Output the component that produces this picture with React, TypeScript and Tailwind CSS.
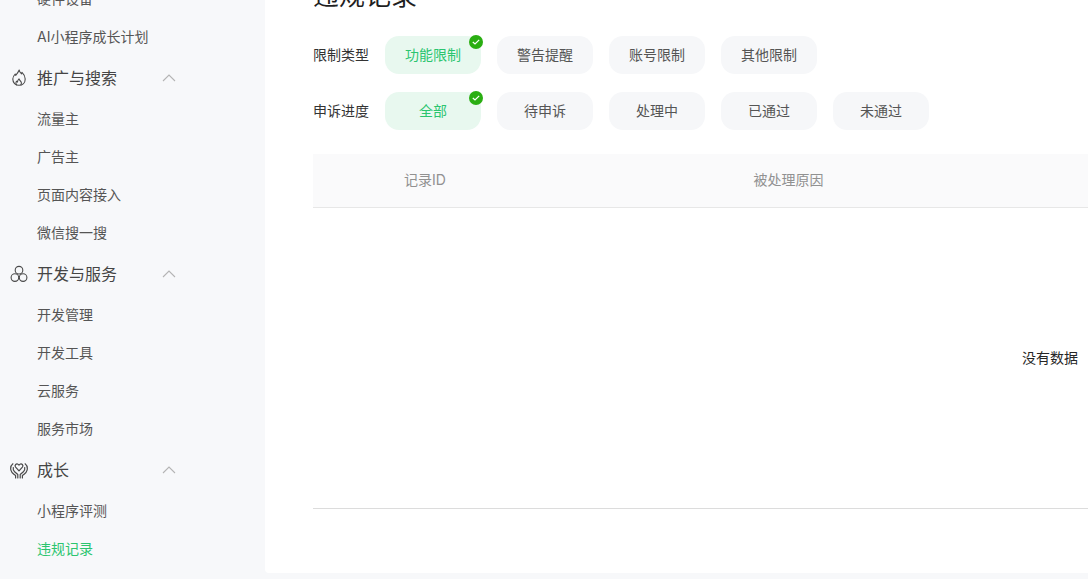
const FONT = 'font-["Inter","Noto_Sans_CJK_SC",sans-serif]';

const FlameIcon = () => (
  <svg width="14" height="18" viewBox="0 0 14 18" fill="none" stroke="#4a4a4a" strokeWidth="1.1" strokeLinejoin="round">
    <path d="M7.200 1c.2 2 1.300 3 2.300 3.800.3-.5.500-1 .5-1.500 1.800 1.700 3.200 3.800 3.200 6.700 0 3.700-2.600 6.300-6.200 6.300S.8 13.700.8 10C.8 7.800 2 6.300 3.200 5c.1.500.3 1 .6 1.300C4.900 4.900 6.400 3 7.200 1z" />
    <path d="M4.600 16.100c-.9-1.200-1-2.700-.2-3.900.4.200.8.500 1 .9.100-1.400.700-2.500 1.600-3.300.2 1.200 1.800 2.200 2.300 3.600.3 1 .1 1.900-.7 2.700" />
  </svg>
);

const CirclesIcon = () => (
  <svg width="18" height="18" viewBox="0 0 18 18" fill="none" stroke="#4a4a4a" strokeWidth="1.1">
    <circle cx="9" cy="5.200" r="3.800" />
    <circle cx="4.900" cy="12.600" r="3.800" />
    <circle cx="13.100" cy="12.600" r="3.800" />
  </svg>
);

const HandsIcon = () => (
  <svg width="18" height="18" viewBox="0 0 18 18" fill="none" stroke="#4a4a4a" strokeWidth="1.2" strokeLinejoin="round" strokeLinecap="round">
    <path d="M9 9.800 5.600 6.200C4 4.400 6.500 1.800 8.200 3.400l.8.800.8-.8c1.700-1.600 4.200 1 2.600 2.800z" />
    <path d="M2.900 2.800C1.100 4.300.3 6.700.9 9.200c.4 1.700 1.600 3 3 4.100l1.700 1.300V17" />
    <path d="M15.100 2.800c1.800 1.500 2.600 3.900 2 6.400-.4 1.700-1.600 3-3 4.100l-1.700 1.300V17" />
    <path d="M3.300 6.500c-.4 1.700.2 3.200 1.300 4.200l3.200 2.800V17" />
    <path d="M14.700 6.500c.4 1.700-.2 3.200-1.300 4.200l-3.200 2.800V17" />
  </svg>
);

const Chevron = () => (
  <svg width="14" height="8" viewBox="0 0 14 8" fill="none" stroke="#b4b4b4" strokeWidth="1.1">
    <path d="M1 7l6-6 6 6" />
  </svg>
);

const NavItem = ({ label, active }: { label: string; active?: boolean }) => (
  <div className={`h-[38px] pl-[37px] flex items-center text-sm ${active ? 'text-[#2bc56f]' : 'text-[#555555]'}`}>
    {label}
  </div>
);

const NavHeading = ({ label, icon, iconPad }: { label: string; icon: React.ReactNode; iconPad: string }) => (
  <div className="h-[44px] flex items-center text-[#454545]">
    <div className={`w-[37px] flex items-center justify-start ${iconPad}`}>{icon}</div>
    <span className="text-base flex-1">{label}</span>
    <div className="mr-[89px] flex items-center">
      <Chevron />
    </div>
  </div>
);

const Chip = ({ label, active }: { label: string; active?: boolean }) => (
  <div
    className={`relative w-[96px] h-[38px] rounded-[14px] flex items-center justify-center text-sm ${
      active ? 'bg-[#e8f8ef] text-[#2bc56f]' : 'bg-[#f6f7f9] text-[#555555]'
    }`}
  >
    {label}
    {active && (
      <div className="absolute -top-[1px] -right-[2px] w-[14px] h-[14px] rounded-full bg-[#2aae12] flex items-center justify-center">
        <svg width="8" height="6" viewBox="0 0 8 6" fill="none" stroke="#ffffff" strokeWidth="1.200">
          <path d="M.8 3l2.200 2L7.200 .8" />
        </svg>
      </div>
    )}
  </div>
);

const FilterRow = ({ title, options }: { title: string; options: string[] }) => (
  <div className="flex items-center gap-4 h-[38px]">
    <div className="w-[56px] text-sm text-[#333333]">{title}</div>
    {options.map((o, i) => (
      <Chip key={o} label={o} active={i === 0} />
    ))}
  </div>
);

export default function App() {
  return (
    <div className={`${FONT} w-[1088px] h-[579px] overflow-hidden flex bg-[#f7f8fa]`}>
      {/* Sidebar */}
      <aside className="w-[265px] shrink-0 -mt-[20px]">
        <NavItem label="硬件设备" />
        <NavItem label="AI小程序成长计划" />
        <NavHeading label="推广与搜索" icon={<FlameIcon />} iconPad="pl-[12px]" />
        <NavItem label="流量主" />
        <NavItem label="广告主" />
        <NavItem label="页面内容接入" />
        <NavItem label="微信搜一搜" />
        <NavHeading label="开发与服务" icon={<CirclesIcon />} iconPad="pl-[10px]" />
        <NavItem label="开发管理" />
        <NavItem label="开发工具" />
        <NavItem label="云服务" />
        <NavItem label="服务市场" />
        <NavHeading label="成长" icon={<HandsIcon />} iconPad="pl-[10px]" />
        <NavItem label="小程序评测" />
        <NavItem label="违规记录" active />
      </aside>

      {/* Main */}
      <main className="flex-1 min-w-0 h-[573px] bg-white rounded-bl-[4px] overflow-hidden pl-[48px]">
        <h1 className="-mt-[24px] h-[40px] leading-[40px] text-[26px] font-normal text-[#1f1f1f]">违规记录</h1>
        <div className="mt-[20px] flex flex-col gap-[18px]">
          <FilterRow title="限制类型" options={['功能限制', '警告提醒', '账号限制', '其他限制']} />
          <FilterRow title="申诉进度" options={['全部', '待申诉', '处理中', '已通过', '未通过']} />
        </div>

        <div className="mt-[24px] w-[1474px]">
          <div className="h-[54px] pb-[2px] flex items-center bg-[#fafafb] border-b border-[#e7e7e7] text-sm text-[#919191]">
            <div className="w-[224px] text-center">记录ID</div>
            <div className="w-[502px] pl-[1px] text-center">被处理原因</div>
          </div>
          <div className="h-[301px] flex items-center justify-center border-b border-[#dcdcdc] text-sm text-[#262626]">
            没有数据
          </div>
        </div>
      </main>
    </div>
  );
}
